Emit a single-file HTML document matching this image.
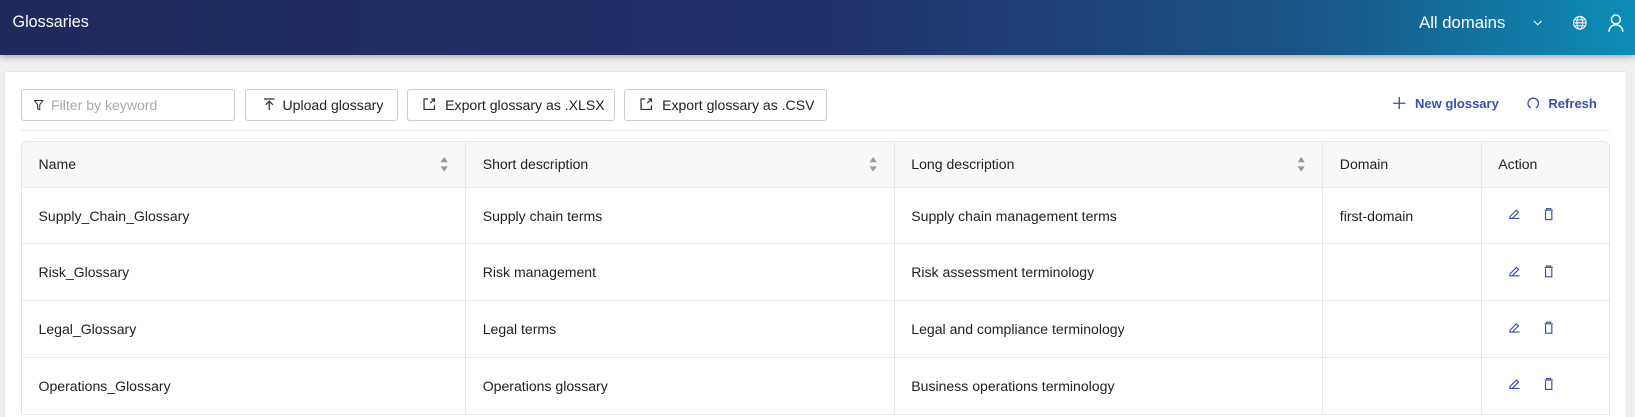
<!DOCTYPE html>
<html><head><meta charset="utf-8"><style>
*{box-sizing:border-box;margin:0;padding:0}
html,body{width:1635px;height:417px;overflow:hidden;background:#f0f0f2}
#w{zoom:1.0427;width:1568px;height:400px;position:relative;font-family:"Liberation Sans",sans-serif;color:#222;font-size:13.5px}
.hdr{position:absolute;left:0;top:0;width:1568px;height:53px;background:linear-gradient(90deg,#212a5e 0%,#22306a 50%,#1a5588 80%,#0c8db6 100%);box-shadow:0 2px 6px rgba(0,0,0,.3);color:#fff}
.hdr .t{position:absolute;left:12px;top:12px;font-size:15.5px}
.hdr .d{position:absolute;left:1361px;top:12px;font-size:16px}
.card{position:absolute;left:4px;top:68px;width:1556px;height:340px;background:#fff;border:1px solid #e6e6e6}
.btn{position:absolute;top:85px;height:31px;border:1px solid #cfcfcf;border-radius:3px;background:#fff;line-height:29px;padding-left:15px;color:#222;white-space:nowrap}
.lnk{position:absolute;top:92px;font-size:12.5px;font-weight:bold;color:#3f4ea8}
.tbl{position:absolute;left:20px;top:135px;width:1524px;border:1px solid #e4e4e4;border-bottom:none;border-radius:6px 6px 0 0;overflow:hidden}
.row{display:flex;height:54.5px;border-bottom:1px solid #e8e8e8}
.row.h{height:44px;background:#f8f8f8}
.c{padding-left:16px;display:flex;align-items:center;border-right:1px solid #e8e8e8;position:relative;white-space:nowrap}
.c:last-child{border-right:none}
.w1{width:426px}.w2{width:411px}.w3{width:411px}.w4{width:152px}.w5{width:122px}
.sort{position:absolute;right:16px;top:14px;width:8px}
</style></head><body><div id="w">
<div class="hdr"><div class="t">Glossaries</div><div class="d">All domains</div>
<svg style="position:absolute;left:1469px;top:16px" width="11" height="11" viewBox="0 0 12 12"><path d="M2 4l4 4 4-4" stroke="#fff" fill="none" stroke-width="1.1"/></svg>
<svg style="position:absolute;left:1508px;top:14px" width="15" height="15" viewBox="0 0 16 16" fill="none" stroke="#fff" stroke-width="1.1"><circle cx="8" cy="8" r="6.5"/><ellipse cx="8" cy="8" rx="3" ry="6.5"/><path d="M1.5 8h13M2.5 5h11M2.5 11h11"/></svg>
<svg style="position:absolute;left:1541px;top:12px" width="17" height="19" viewBox="0 0 18 20" fill="none" stroke="#fff" stroke-width="1.5"><circle cx="9" cy="6.5" r="4.5"/><path d="M2 19c0-4 3-7 7-7s7 3 7 7"/></svg>
</div>
<div class="card"></div>
<div class="btn" style="left:20px;width:205px;color:#aaa;padding-left:28px">Filter by keyword
<svg style="position:absolute;left:12px;top:10px" width="9" height="10" viewBox="0 0 9 10"><path d="M0.5 0.5h8L5.5 4.5v5L3.5 8.5v-4z" fill="none" stroke="#333" stroke-width="1"/></svg></div>
<div class="btn" style="left:235px;width:147px;padding-left:35px">Upload glossary
<svg style="position:absolute;left:16px;top:8px" width="12" height="12" viewBox="0 0 12 12" fill="none" stroke="#333" stroke-width="1.2"><path d="M1 1h10M6 3v9M2.5 6.5L6 3l3.5 3.5"/></svg></div>
<div class="btn" style="left:390px;width:200px;padding-left:36px">Export glossary as .XLSX
<svg style="position:absolute;left:15px;top:8px" width="12" height="12" viewBox="0 0 12 12" fill="none" stroke="#333" stroke-width="1.2"><path d="M5 1H1v10h10V7M8 1h3v3M11 1L7 5"/></svg></div>
<div class="btn" style="left:598px;width:195px;padding-left:36px">Export glossary as .CSV
<svg style="position:absolute;left:15px;top:8px" width="12" height="12" viewBox="0 0 12 12" fill="none" stroke="#333" stroke-width="1.2"><path d="M5 1H1v10h10V7M8 1h3v3M11 1L7 5"/></svg></div>
<svg style="position:absolute;left:1336px;top:93px" width="12" height="12" viewBox="0 0 12 12" stroke="#3f4ea8" stroke-width="1.3"><path d="M6 0v12M0 6h12"/></svg>
<div class="lnk" style="left:1357px">New glossary</div>
<svg style="position:absolute;left:1464px;top:93px" width="12" height="12" viewBox="0 0 12 12" fill="none" stroke="#3f4ea8" stroke-width="1.3"><path d="M3.5 10.5A5 5 0 1 1 8.5 10.5"/></svg>
<div class="lnk" style="left:1485px">Refresh</div>
<div style="position:absolute;left:20px;top:125px;width:1524px;height:1px;background:#ececec"></div>
<div class="tbl">
<div class="row h"><div class="c w1">Name<svg class="sort" viewBox="0 0 8 16" height="16"><path d="M4 1l3.5 5h-7zM4 15l3.5-5h-7z" fill="#999"/></svg></div><div class="c w2">Short description<svg class="sort" viewBox="0 0 8 16" height="16"><path d="M4 1l3.5 5h-7zM4 15l3.5-5h-7z" fill="#999"/></svg></div><div class="c w3">Long description<svg class="sort" viewBox="0 0 8 16" height="16"><path d="M4 1l3.5 5h-7zM4 15l3.5-5h-7z" fill="#999"/></svg></div><div class="c w4">Domain</div><div class="c w5">Action</div></div>
<div class="row"><div class="c w1">Supply_Chain_Glossary</div><div class="c w2">Supply chain terms</div><div class="c w3">Supply chain management terms</div><div class="c w4">first-domain</div><div class="c w5"></div></div>
<div class="row"><div class="c w1">Risk_Glossary</div><div class="c w2">Risk management</div><div class="c w3">Risk assessment terminology</div><div class="c w4"></div><div class="c w5"></div></div>
<div class="row"><div class="c w1">Legal_Glossary</div><div class="c w2">Legal terms</div><div class="c w3">Legal and compliance terminology</div><div class="c w4"></div><div class="c w5"></div></div>
<div class="row"><div class="c w1">Operations_Glossary</div><div class="c w2">Operations glossary</div><div class="c w3">Business operations terminology</div><div class="c w4"></div><div class="c w5"></div></div>
</div>
<svg style="position:absolute;left:1445px;top:199px" width="60" height="180" viewBox="0 0 60 180" fill="none" stroke="#3f4ea8" stroke-width="1.1">
<g id="a"><path d="M2 11h10M3 9l6-6 2 2-6 6H3z"/><path d="M36 3h8M38 3V1.5h4V3M37 4v8h6V4"/></g>
<use href="#a" y="55"/><use href="#a" y="109"/><use href="#a" y="163"/>
</svg>
</div></body></html>
